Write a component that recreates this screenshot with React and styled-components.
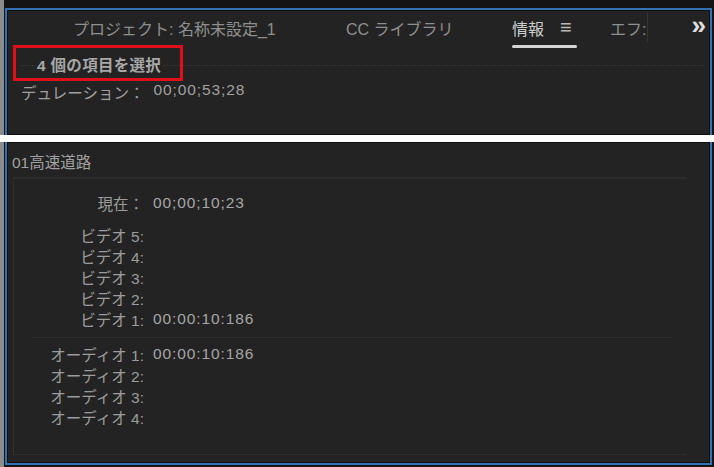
import styled, { createGlobalStyle } from "styled-components";

const Global = createGlobalStyle`
  html, body {
    margin: 0;
    padding: 0;
    background: #161616;
  }
  body {
    font-family: "Liberation Sans", "Noto Sans CJK JP", sans-serif;
    font-size: 15.5px;
    color: #a3a3a3;
  }
`;

const Page = styled.div`
  width: 714px;
  height: 467px;
  display: flex;
  flex-direction: column;
  overflow: hidden;
`;

const Section = styled.div`
  height: ${(p) => p.h}px;
  box-sizing: border-box;
  padding: ${(p) => (p.top ? "8px 2px 0 1px" : "0 2px 2px 1px")};
  border-left: 4px solid #8c8c8c;
  background: #141414;
  display: flex;
`;

const Gap = styled.div`
  height: 7px;
  background: #fff;
`;

const Panel = styled.div`
  flex: 1;
  background: #232323;
  border: 2px solid #3371b4;
  ${(p) => (p.top ? "border-bottom: none;" : "border-top: none;")}
  box-shadow: inset 0 0 0 1px #101010;
  position: relative;
  display: flex;
  flex-direction: column;
`;

const TabBar = styled.div`
  height: 38px;
  display: flex;
  align-items: center;
  padding-left: 66px;
`;

const Tab = styled.div`
  width: ${(p) => p.w}px;
  flex: none;
  color: ${(p) => (p.active ? "#cfcfcf" : "#8f8f8f")};
  font-size: 16px;
  white-space: nowrap;
  position: relative;
  display: flex;
  align-items: center;
  height: 38px;
  padding-bottom: 3px;
  box-sizing: border-box;
`;

const Underline = styled.div`
  position: absolute;
  left: 0;
  bottom: 0px;
  width: 65px;
  height: 3px;
  border-radius: 2px;
  background: #d4d4d4;
`;

const Menu = styled.span`
  margin-left: 16px;
  font-size: 20px;
  color: #b8b8b8;
`;

const Sep = styled.div`
  width: 1px;
  height: 30px;
  margin-bottom: 4px;
  background: #353535;
`;

const More = styled.div`
  margin-left: auto;
  margin-right: 8px;
  color: #e0e0e0;
  font-weight: bold;
  font-size: 26px;
  letter-spacing: -4px;
  padding-bottom: 8px;
`;

const GroupHead = styled.div`
  display: flex;
  align-items: center;
  margin: 4px 6px 0 13px;
  height: 26px;
`;

const Dots = styled.div`
  flex: ${(p) => (p.grow ? 1 : "none")};
  width: ${(p) => (p.grow ? "auto" : "15px")};
  border-top: 1px dotted #3c3c3c;
`;

const GroupTitle = styled.div`
  font-weight: bold;
  color: #a8a8a8;
  font-size: 15.5px;
  letter-spacing: 0.3px;
  padding: 0 2px 2px 2px;
`;

const Callout = styled.div`
  position: absolute;
  left: 6px;
  top: 35px;
  width: 164px;
  height: 30px;
  border: 3px solid #e0101a;
`;

const DurRow = styled.div`
  margin: 3px 0 0 14px;
  display: flex;
  gap: 9px;
  color: #a0a0a0;
`;

const Num = styled.span`
  letter-spacing: 0.9px;
`;

const Clip = styled.div`
  padding: 8px 0 0 5px;
  height: 20px;
  color: #a2a2a2;
`;

const Frame = styled.div`
  flex: 1;
  margin: 7px 24px 8px 6px;
  border-top: 2px solid #2b2b2b;
  border-left: 1px dotted #3a3a3a;
  border-bottom: 1px dotted #3a3a3a;
  padding-top: 13px;
`;

const Row = styled.div`
  display: flex;
  height: 21.1px;
  align-items: center;
  margin-bottom: ${(p) => p.mb || 0}px;
`;

const Label = styled.div`
  width: 130px;
  text-align: right;
  color: #9c9c9c;
  white-space: nowrap;
`;

const Value = styled(Num)`
  margin-left: 9px;
  color: #a6a6a6;
`;

const Divider = styled.div`
  margin: 7px 13px 6px 17px;
  border-top: 1px solid #2e2e2e;
`;

const video = [
  ["ビデオ 5:", ""],
  ["ビデオ 4:", ""],
  ["ビデオ 3:", ""],
  ["ビデオ 2:", ""],
  ["ビデオ 1:", "00:00:10:186"],
];

const audio = [
  ["オーディオ 1:", "00:00:10:186"],
  ["オーディオ 2:", ""],
  ["オーディオ 3:", ""],
  ["オーディオ 4:", ""],
];

export default function App() {
  return (
    <Page>
      <Global />
      <Section h={135} top>
        <Panel top>
          <TabBar>
            <Tab w={273}>プロジェクト: 名称未設定_1</Tab>
            <Tab w={166}>CC ライブラリ</Tab>
            <Tab w={98} active>
              情報<Menu>≡</Menu>
              <Underline />
            </Tab>
            <Tab w={37}>エフ:</Tab>
            <Sep />
            <More>»</More>
          </TabBar>
          <GroupHead>
            <Dots />
            <GroupTitle>4 個の項目を選択</GroupTitle>
            <Dots grow />
          </GroupHead>
          <DurRow>
            <span>デュレーション：</span>
            <Num>00;00;53;28</Num>
          </DurRow>
          <Callout />
        </Panel>
      </Section>
      <Gap />
      <Section h={325}>
        <Panel>
          <Clip>01高速道路</Clip>
          <Frame>
            <Row mb={11}>
              <Label>現在：</Label>
              <Value>00;00;10;23</Value>
            </Row>
            {video.map(([l, v]) => (
              <Row key={l}>
                <Label>{l}</Label>
                <Value>{v}</Value>
              </Row>
            ))}
            <Divider />
            {audio.map(([l, v]) => (
              <Row key={l}>
                <Label>{l}</Label>
                <Value>{v}</Value>
              </Row>
            ))}
          </Frame>
        </Panel>
      </Section>
    </Page>
  );
}
